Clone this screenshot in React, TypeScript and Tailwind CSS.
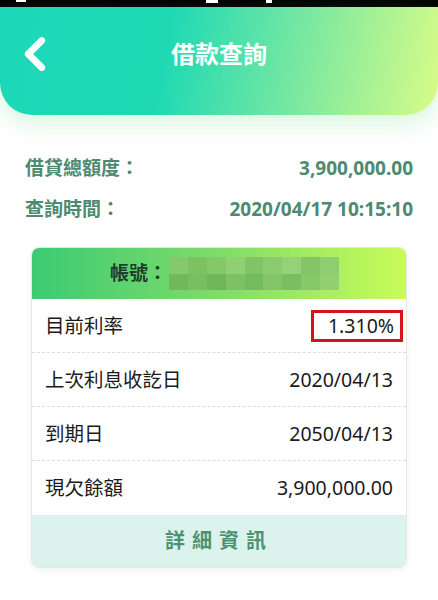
import { ChevronLeft } from "lucide-react";

const FONT = "font-['Noto_Sans','Noto_Sans_CJK_TC',sans-serif]";

const rows = [
  { label: "目前利率", value: "1.310%", mark: true },
  { label: "上次利息收訖日", value: "2020/04/13" },
  { label: "到期日", value: "2050/04/13" },
  { label: "現欠餘額", value: "3,900,000.00" },
];

const mosaic = [
  "#86c96c", "#7cc263", "#84c86a", "#90cf72", "#7fc466", "#8acb6e", "#95d176", "#84c56a", "#8fce70",
  "#6fb85c", "#78bf61", "#6db659", "#7cc164", "#74bb5f", "#82c667", "#79be62", "#86c96a", "#92d073",
];

export default function App() {
  return (
    <div className={`${FONT} h-[600px] w-[438px] overflow-hidden bg-white`}>
      <div className="flex h-[7px] items-start bg-black">
        <div className="ml-[16px] h-[2px] w-[10px] bg-white" />
        <div className="ml-[180px] h-[3px] w-[12px] bg-white" />
        <div className="ml-[48px] h-[3px] w-[6px] bg-white" />
      </div>

      <div className="flex h-[108px] items-center rounded-b-[32px] bg-[linear-gradient(100deg,#1dd8b8_0%,#1fd9b4_38%,#7ae8a0_68%,#d8fc88_100%)] shadow-[0_10px_22px_rgba(140,225,160,0.3)]">
        <ChevronLeft className="ml-[8px] -mt-[14px] text-white" size={54} strokeWidth={3} />
        <div className="-ml-[62px] -mt-[14px] flex-1 text-center text-[24px] font-bold text-white">
          借款查詢
        </div>
      </div>

      <div className="mt-[42px] flex flex-col gap-[19px] px-[25px] text-[19px] font-bold text-[#4d8a6f]">
        <div className="flex h-[22px] items-center justify-between">
          <span>借貸總額度：</span>
          <span>3,900,000.00</span>
        </div>
        <div className="flex h-[22px] items-center justify-between">
          <span>查詢時間：</span>
          <span>2020/04/17 10:15:10</span>
        </div>
      </div>

      <div className="mx-[31px] mt-[27px] overflow-hidden rounded-[8px] border border-[#e6e6e6] shadow-[0_2px_6px_rgba(0,0,0,0.06)]">
        <div className="flex h-[51px] items-center bg-[linear-gradient(90deg,#3ccb74_0%,#7fdc68_50%,#c8fc58_100%)] pl-[78px]">
          <span className="text-[19px] font-bold text-[#1e3d2a]">帳號：</span>
          <div className="ml-[2px] grid h-[33px] w-[170px] grid-cols-9 grid-rows-2">
            {mosaic.map((c, i) => (
              <div key={i} style={{ backgroundColor: c }} />
            ))}
          </div>
        </div>

        {rows.map((r, i) => (
          <div
            key={r.label}
            className={`flex h-[54px] items-center justify-between bg-white pl-[13px] pr-[13px] text-[19.5px] text-[#1a1a1a] ${
              i < rows.length - 1 ? "border-b border-dashed border-[#dcdcdc]" : ""
            }`}
          >
            <span>{r.label}</span>
            {r.mark ? (
              <span className="-mr-[10px] flex h-[32px] w-[92px] items-center justify-end border-[3px] border-[#d3141c] pr-[6px]">
                {r.value}
              </span>
            ) : (
              <span>{r.value}</span>
            )}
          </div>
        ))}

        <div className="flex h-[52px] items-center justify-center bg-[#dcf2ec] text-[20px] font-bold tracking-[7px] text-[#4b9273]">
          詳細資訊
        </div>
      </div>
    </div>
  );
}
